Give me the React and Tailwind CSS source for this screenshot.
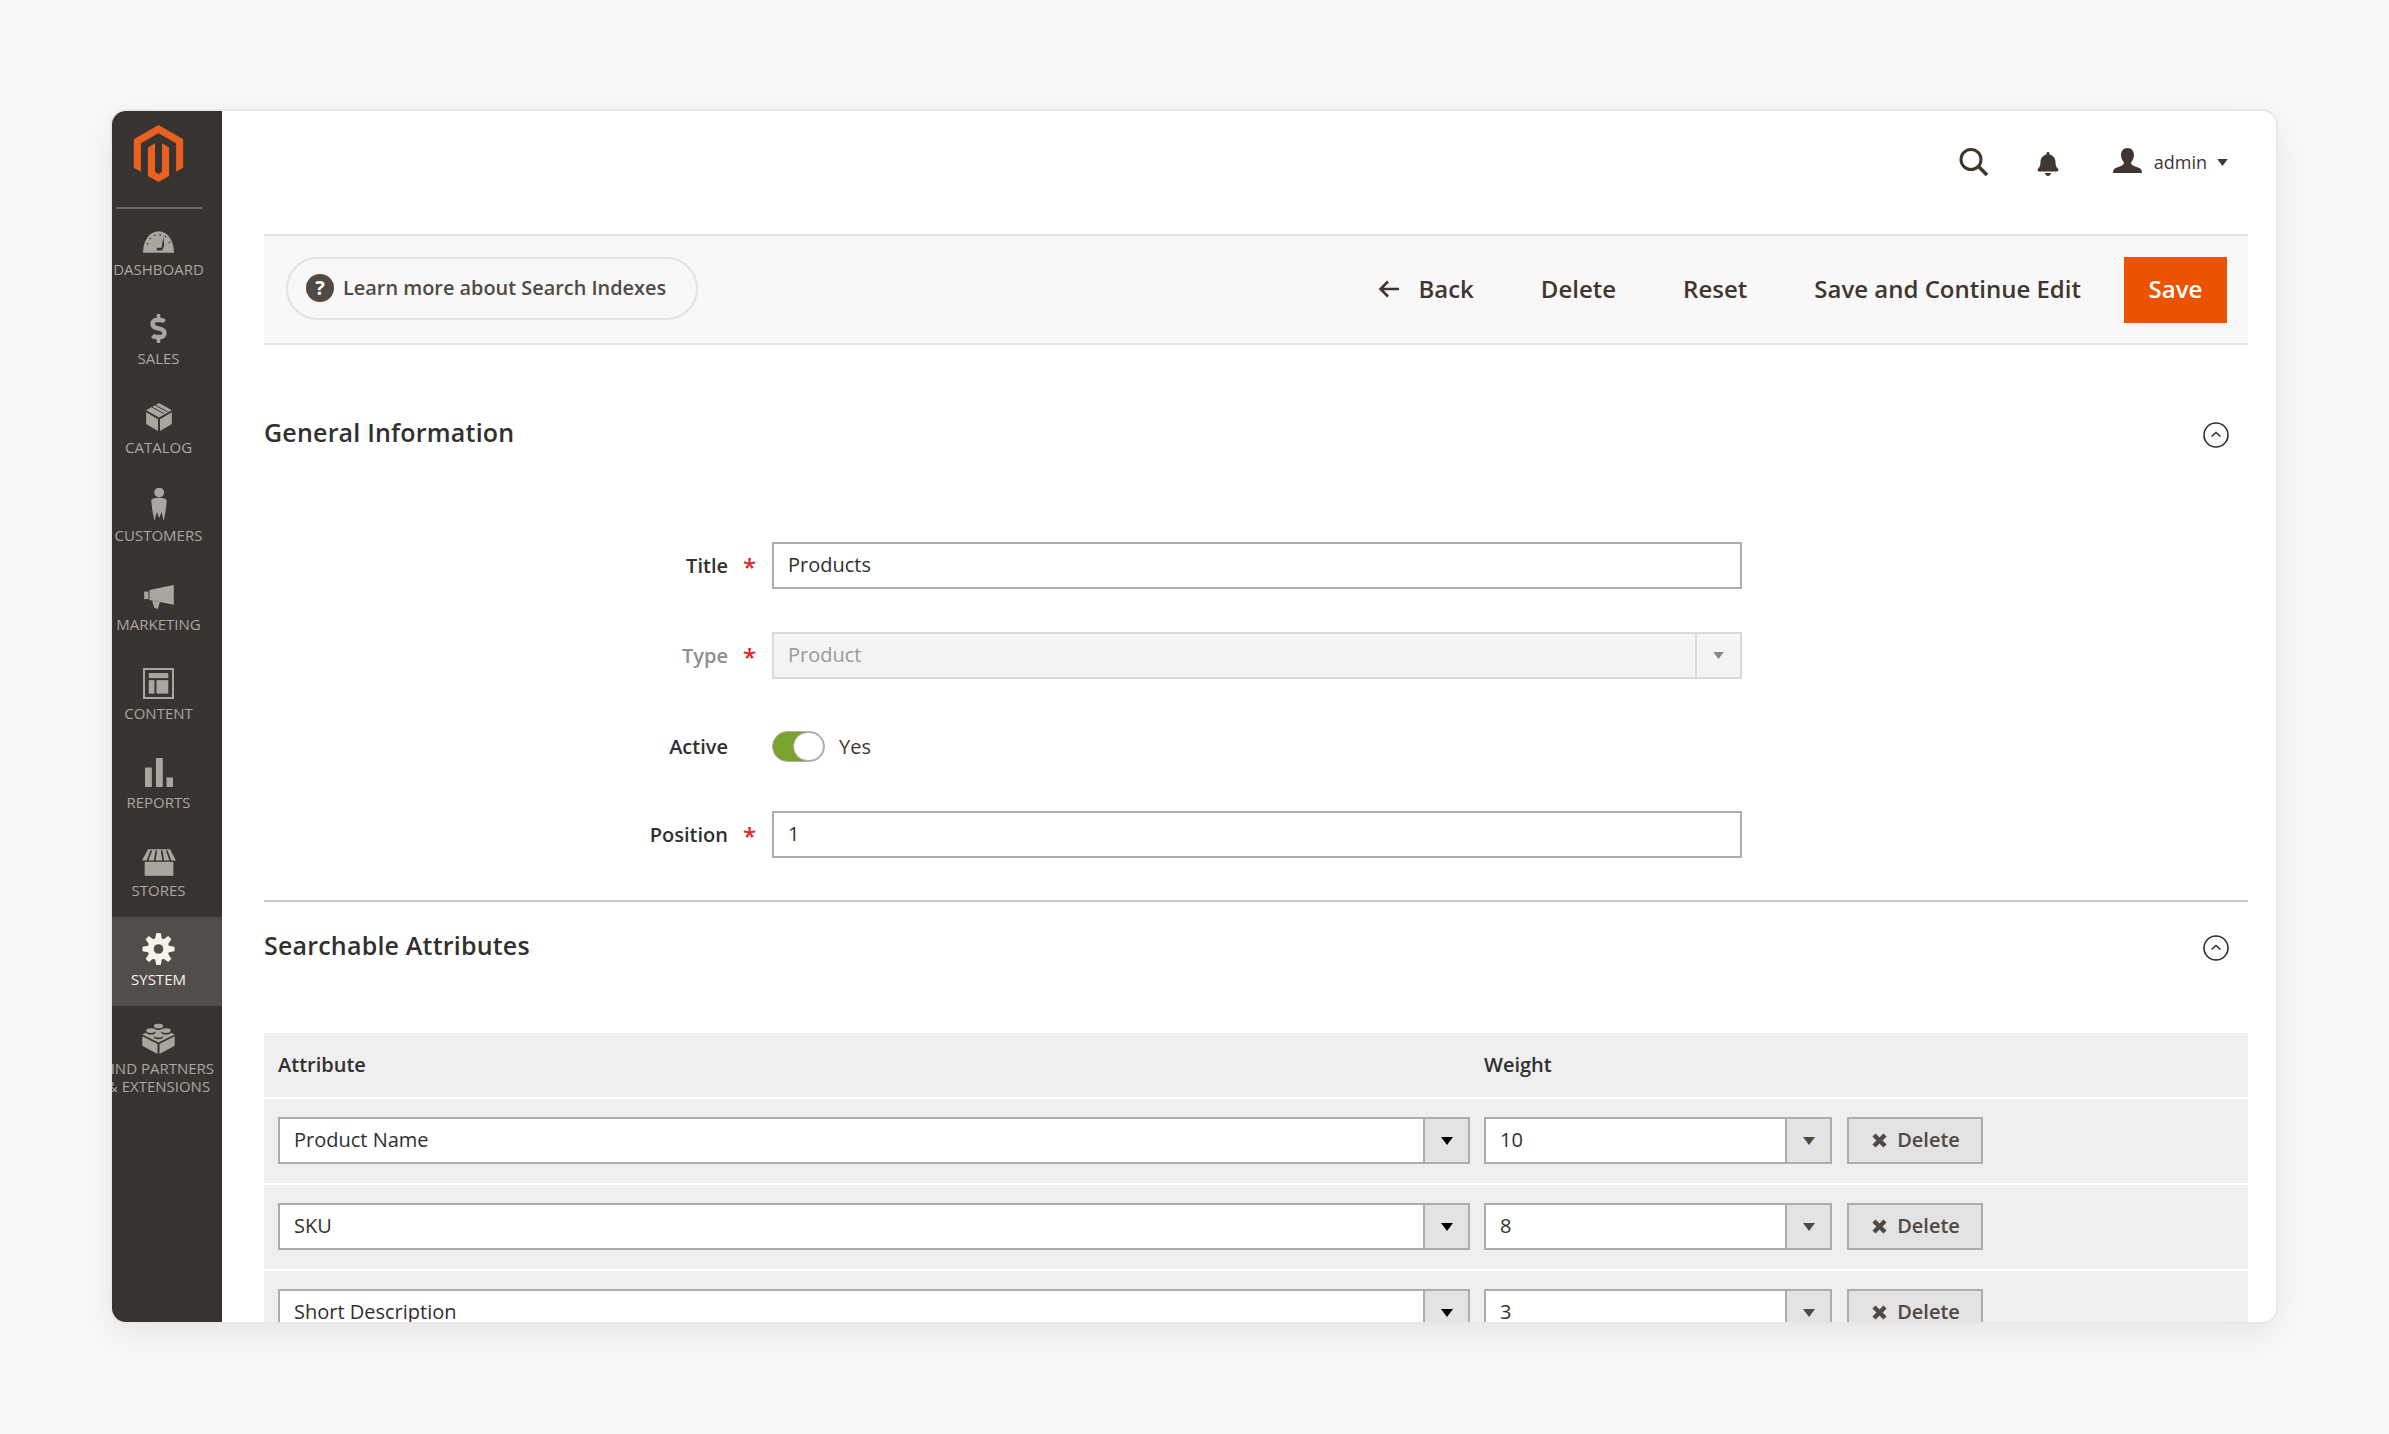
import React from "react";
import { SiMagento } from "react-icons/si";
import { FaDollarSign, FaBell } from "react-icons/fa";

const G = "#aaa69f";
const BG = "#373330";

const Dash = () => (
  <svg width="31" height="22" viewBox="0 0 94 65" className="mt-[6px]">
    <path d="M0 65C0 28 20 0 47 0C74 0 94 28 94 65Z" fill={G} />
    {[[14,38],[22,22],[36,12],[52,11],[68,16],[80,34]].map(([x,y],i)=>(<circle key={i} cx={x} cy={y} r="2.5" fill={BG}/>))}
    <path d="M62 16L56 50L42 50L42 58L58 58L64 44Z" fill={BG} />
  </svg>
);
const Catalog = () => (
  <svg width="26" height="28" viewBox="0 0 78 85" fill={G}>
    <polygon points="39,0 78,22 39,44 0,22" />
    <polygon points="0,28 36,49 36,85 0,64" />
    <polygon points="42,49 78,28 78,64 42,85" />
    <path d="M17 12L55 33M27 6L65 27" stroke={BG} strokeWidth="3" />
  </svg>
);
const Customer = () => (
  <svg width="16" height="33" viewBox="0 0 47 100" fill={G} className="-mt-[2px]">
    <circle cx="24" cy="14" r="15" />
    <path d="M0 40C0 33 8 30 16 30H31C39 30 47 33 47 40L43 72L38 100L31 72L24 92L17 72L10 100L4 72Z" />
  </svg>
);
const Mega = () => (
  <svg width="30" height="24" viewBox="0 0 90 73" fill={G} className="mt-[6px]">
    <polygon points="16,15 90,0 90,60 16,46" />
    <rect x="0" y="20" width="13" height="23" />
    <polygon points="24,48 48,52 41,73 31,70" />
  </svg>
);
const Content = () => (
  <svg width="31" height="31" viewBox="0 0 92 92" fill={G} className="mt-[2px]">
    <rect x="3" y="3" width="86" height="86" fill="none" stroke={G} strokeWidth="6" />
    <rect x="17" y="15" width="58" height="15" />
    <rect x="17" y="36" width="17" height="40" />
    <rect x="40" y="36" width="35" height="40" />
  </svg>
);
const Reports = () => (
  <svg width="28" height="29" viewBox="0 0 82 85" fill={G} className="mt-[2px]">
    <rect x="0" y="28" width="20" height="57" />
    <rect x="32" y="0" width="20" height="85" />
    <rect x="63" y="57" width="19" height="28" />
  </svg>
);
const Stores = () => (
  <svg width="34" height="27" viewBox="0 0 102 80" fill={G} className="mt-[5px]">
    <polygon points="18,0 84,0 102,34 0,34" />
    <rect x="8" y="38" width="86" height="42" />
    <path d="M28 4L16 36M43 4L38 36M59 4L64 36M74 4L86 36" stroke={BG} strokeWidth="5" />
  </svg>
);
const Gear = () => (
  <svg width="33" height="32" viewBox="-50 -50 100 100" fill="#f7f3eb">
    <circle r="34" />
    {[0,45,90,135,180,225,270,315].map((a)=>(<path key={a} d="M-11 -28L-7 -50H7L11 -28Z" transform={`rotate(${a})`} />))}
    <circle r="15" fill="#524d49" />
  </svg>
);
const Lego = () => (
  <svg width="33" height="32" viewBox="0 0 98 97" fill={G}>
    <polygon points="49,14 98,38 49,62 0,38" />
    <polygon points="0,43 46,67 46,97 0,72" />
    <polygon points="52,67 98,43 98,72 52,97" />
    {[[49,12],[26,26],[72,26],[49,40]].map(([x,y],i)=>(
      <g key={i}>
        <ellipse cx={x} cy={y+5} rx="14" ry="7" fill={BG} />
        <ellipse cx={x} cy={y} rx="14" ry="7" />
      </g>
    ))}
  </svg>
);

const nav = [
  ["DASHBOARD", <Dash />],
  ["SALES", <FaDollarSign className="w-[19px] h-[29px] mt-[2px]" color={G} />],
  ["CATALOG", <Catalog />],
  ["CUSTOMERS", <Customer />],
  ["MARKETING", <Mega />],
  ["CONTENT", <Content />],
  ["REPORTS", <Reports />],
  ["STORES", <Stores />],
  ["SYSTEM", <Gear />, true],
  [["FIND PARTNERS", "& EXTENSIONS"], <Lego />],
];

const Caret = ({ color = "#514943", w = 12, h = 8 }) => (
  <svg width={w} height={h} viewBox="0 0 12 8"><polygon points="0,0 12,0 6,8" fill={color} /></svg>
);

const Collapse = () => (
  <svg width="26" height="26" viewBox="0 0 26 26" fill="none" stroke="#303030">
    <circle cx="13" cy="13" r="12" strokeWidth="1.6" />
    <path d="M8.5 14.5L13 10.5L17.5 14.5" strokeWidth="1.6" />
  </svg>
);

const Label = ({ children, star, muted }) => (
  <>
    <div className={`w-[464px] text-right text-[20px] font-semibold ${muted ? "text-[#8f8f8f]" : "text-[#303030]"}`}>{children}</div>
    <div className="w-[44px] pl-[15px] pt-[3px] h-[30px] text-[24px] leading-[26px] font-semibold text-[#e22626]">{star ? "*" : ""}</div>
  </>
);

const Select = ({ value, className, arrow }) => (
  <div className={`flex h-[47px] shrink-0 bg-white border-2 border-[#adadad] ${className}`}>
    <div className="flex-1 pl-[14px] text-[20px] leading-[42px] text-[#303030] overflow-hidden whitespace-nowrap">{value}</div>
    <div className="w-[45px] shrink-0 flex items-center justify-center bg-[#e3e3e3] border-l-2 border-[#adadad]">
      <Caret color={arrow} />
    </div>
  </div>
);

const Row = ({ attr, weight }) => (
  <div className="flex border-t-2 border-white pt-[18px] pb-[19px] pl-[14px] bg-[#efefef] shrink-0">
    <Select value={attr} arrow="#000000" className="w-[1192px]" />
    <Select value={weight} arrow="#514943" className="w-[348px] ml-[14px]" />
    <button className="w-[136px] h-[47px] ml-[15px] pl-[2px] pb-[1px] flex items-center justify-center gap-[10px] bg-[#e3e3e3] border-2 border-[#adadad] text-[20px] font-semibold text-[#514943]">
      <svg width="15" height="15" viewBox="0 0 15 15" stroke="#514943" strokeWidth="4.5"><path d="M2 2L13 13M13 2L2 13" /></svg>
      Delete
    </button>
  </div>
);

export default function App() {
  return (
    <div className="h-screen bg-[#f8f8f8] pt-[111px] pl-[112px] pr-[113px] font-['Open_Sans',sans-serif] overflow-hidden">
      <div className="flex h-[1211px] bg-white rounded-[14px] overflow-hidden shadow-[0_0_0_2px_#e8e8e8,0_12px_36px_rgba(0,0,0,0.08)]">
        <aside className="w-[110px] shrink-0 bg-[#373330] flex flex-col">
          <div className="h-[96px] shrink-0 pr-[17px] pt-[14px] flex justify-center">
            <SiMagento className="w-[57px] h-[57px]" color="#e9601f" />
          </div>
          <div className="h-[2px] w-[86px] ml-[4px] bg-[#6f6760] -mb-[2px] shrink-0" />
          {nav.map(([label, icon, active], i) => (
            <div key={i} className={`h-[88.75px] shrink-0 pr-[17px] flex flex-col items-center ${active ? "bg-[#524d49] text-[#f7f3eb]" : "text-[#aaa69f]"}`}>
              <div className="h-[40px] mt-[12px] flex items-center justify-center shrink-0">{icon}</div>
              <div className="mt-[1px] text-[15px] leading-[18px] text-center whitespace-nowrap">
                {Array.isArray(label) ? label.map((l) => <div key={l}>{l}</div>) : label}
              </div>
            </div>
          ))}
        </aside>

        <main className="flex-1 min-w-0 pl-[42px] pr-[28px] flex flex-col">
          <header className="h-[123px] shrink-0 pb-[21px] pr-[20px] flex items-center justify-end text-[#41362f]">
            <svg width="30" height="28" viewBox="0 0 30 28" fill="none" stroke="#41362f">
              <circle cx="12" cy="11.5" r="10" strokeWidth="3" />
              <path d="M19.5 18.5L28 27" strokeWidth="3.6" />
            </svg>
            <FaBell className="w-[22px] h-[24px] ml-[48px] mt-[3px]" color="#41362f" />
            <svg width="29" height="25" viewBox="0 0 29 25" fill="#41362f" className="ml-[54px] -mt-[3px]">
              <path d="M14.5 0C10 0 8 3.5 8 7C8 10 9.5 13 11 14.5C11 17 8 18 4 19.5C1 20.5 0 22 0 25H29C29 22 28 20.5 25 19.5C21 18 18 17 18 14.5C19.5 13 21 10 21 7C21 3.5 19 0 14.5 0Z" />
            </svg>
            <span className="ml-[12px] text-[18px] text-[#41362f]">admin</span>
            <span className="ml-[10px] flex"><Caret color="#41362f" w={11} h={7} /></span>
          </header>

          <div className="h-[111px] shrink-0 bg-[#f8f8f8] border-y-2 border-[#e3e3e3] pl-[22px] pr-[21px] flex items-center justify-between">
            <div className="w-[412px] h-[63px] mb-[2px] pb-[2px] border-2 border-[#e3e3e3] rounded-full pl-[18px] flex items-center gap-[10px]">
              <span className="w-[28px] h-[28px] rounded-full bg-[#514943] text-white text-[20px] leading-[28px] font-bold text-center">?</span>
              <span className="text-[19.9px] -ml-[1px] font-semibold text-[#514943] whitespace-nowrap">Learn more about Search Indexes</span>
            </div>
            <div className="flex items-center text-[24px] font-semibold text-[#41362f]">
              <div className="flex items-center gap-[67px] pb-[2px]">
                <span className="flex items-center gap-[19px]">
                  <svg width="21" height="18" viewBox="0 0 21 18" fill="none" stroke="#41362f" strokeWidth="2.6"><path d="M21 9H3M10 1.5L2.5 9L10 16.5" /></svg>
                  Back
                </span>
                <span>Delete</span>
                <span>Reset</span>
                <span>Save and Continue Edit</span>
              </div>
              <button className="ml-[43px] w-[103px] h-[66px] pb-[2px] bg-[#eb5202] text-white font-semibold">Save</button>
            </div>
          </div>

          <div className="mt-[70px] h-[36px] shrink-0 flex items-center justify-between pr-[19px]">
            <h2 className="text-[25px] font-semibold text-[#303030] tracking-[0.2px]">General Information</h2>
            <span className="mt-[4px] flex"><Collapse /></span>
          </div>

          <div className="mt-[91px] flex items-center shrink-0">
            <Label star>Title</Label>
            <div className="w-[970px] h-[47px] border-2 border-[#adadad] pl-[14px] text-[20px] leading-[42px] text-[#303030]">Products</div>
          </div>
          <div className="mt-[43px] flex items-center shrink-0">
            <Label star muted>Type</Label>
            <div className="w-[970px] h-[47px] flex bg-[#f4f4f4] border-2 border-[#dadada]">
              <div className="flex-1 pl-[14px] text-[20px] leading-[42px] text-[#999999]">Product</div>
              <div className="w-[45px] flex items-center justify-center border-l-2 border-[#dadada]"><Caret color="#8a8682" w={11} h={7} /></div>
            </div>
          </div>
          <div className="mt-[44px] h-[47px] flex items-center shrink-0">
            <Label>Active</Label>
            <div className="w-[53px] h-[31px] rounded-full bg-[#79a22e] border border-[#adadad] flex justify-end">
              <div className="w-[31px] h-[29px] rounded-full bg-white border border-[#adadad]" />
            </div>
            <span className="ml-[14px] text-[20px] text-[#41362f]">Yes</span>
          </div>
          <div className="mt-[41px] flex items-center shrink-0">
            <Label star>Position</Label>
            <div className="w-[970px] h-[47px] border-2 border-[#adadad] pl-[14px] text-[20px] leading-[42px] text-[#303030]">1</div>
          </div>

          <div className="mt-[42px] h-[2px] shrink-0 bg-[#cccccc]" />

          <div className="mt-[26px] h-[36px] shrink-0 flex items-center justify-between pr-[19px]">
            <h2 className="text-[25px] font-semibold text-[#303030] tracking-[0.2px]">Searchable Attributes</h2>
            <span className="mt-[4px] flex"><Collapse /></span>
          </div>

          <div className="mt-[69px] h-[64px] shrink-0 bg-[#efefef] pl-[14px] flex items-center text-[20px] font-semibold text-[#303030]">
            <div className="w-[1206px]">Attribute</div>
            <div>Weight</div>
          </div>
          <Row attr="Product Name" weight="10" />
          <Row attr="SKU" weight="8" />
          <Row attr="Short Description" weight="3" />
        </main>
      </div>
    </div>
  );
}
